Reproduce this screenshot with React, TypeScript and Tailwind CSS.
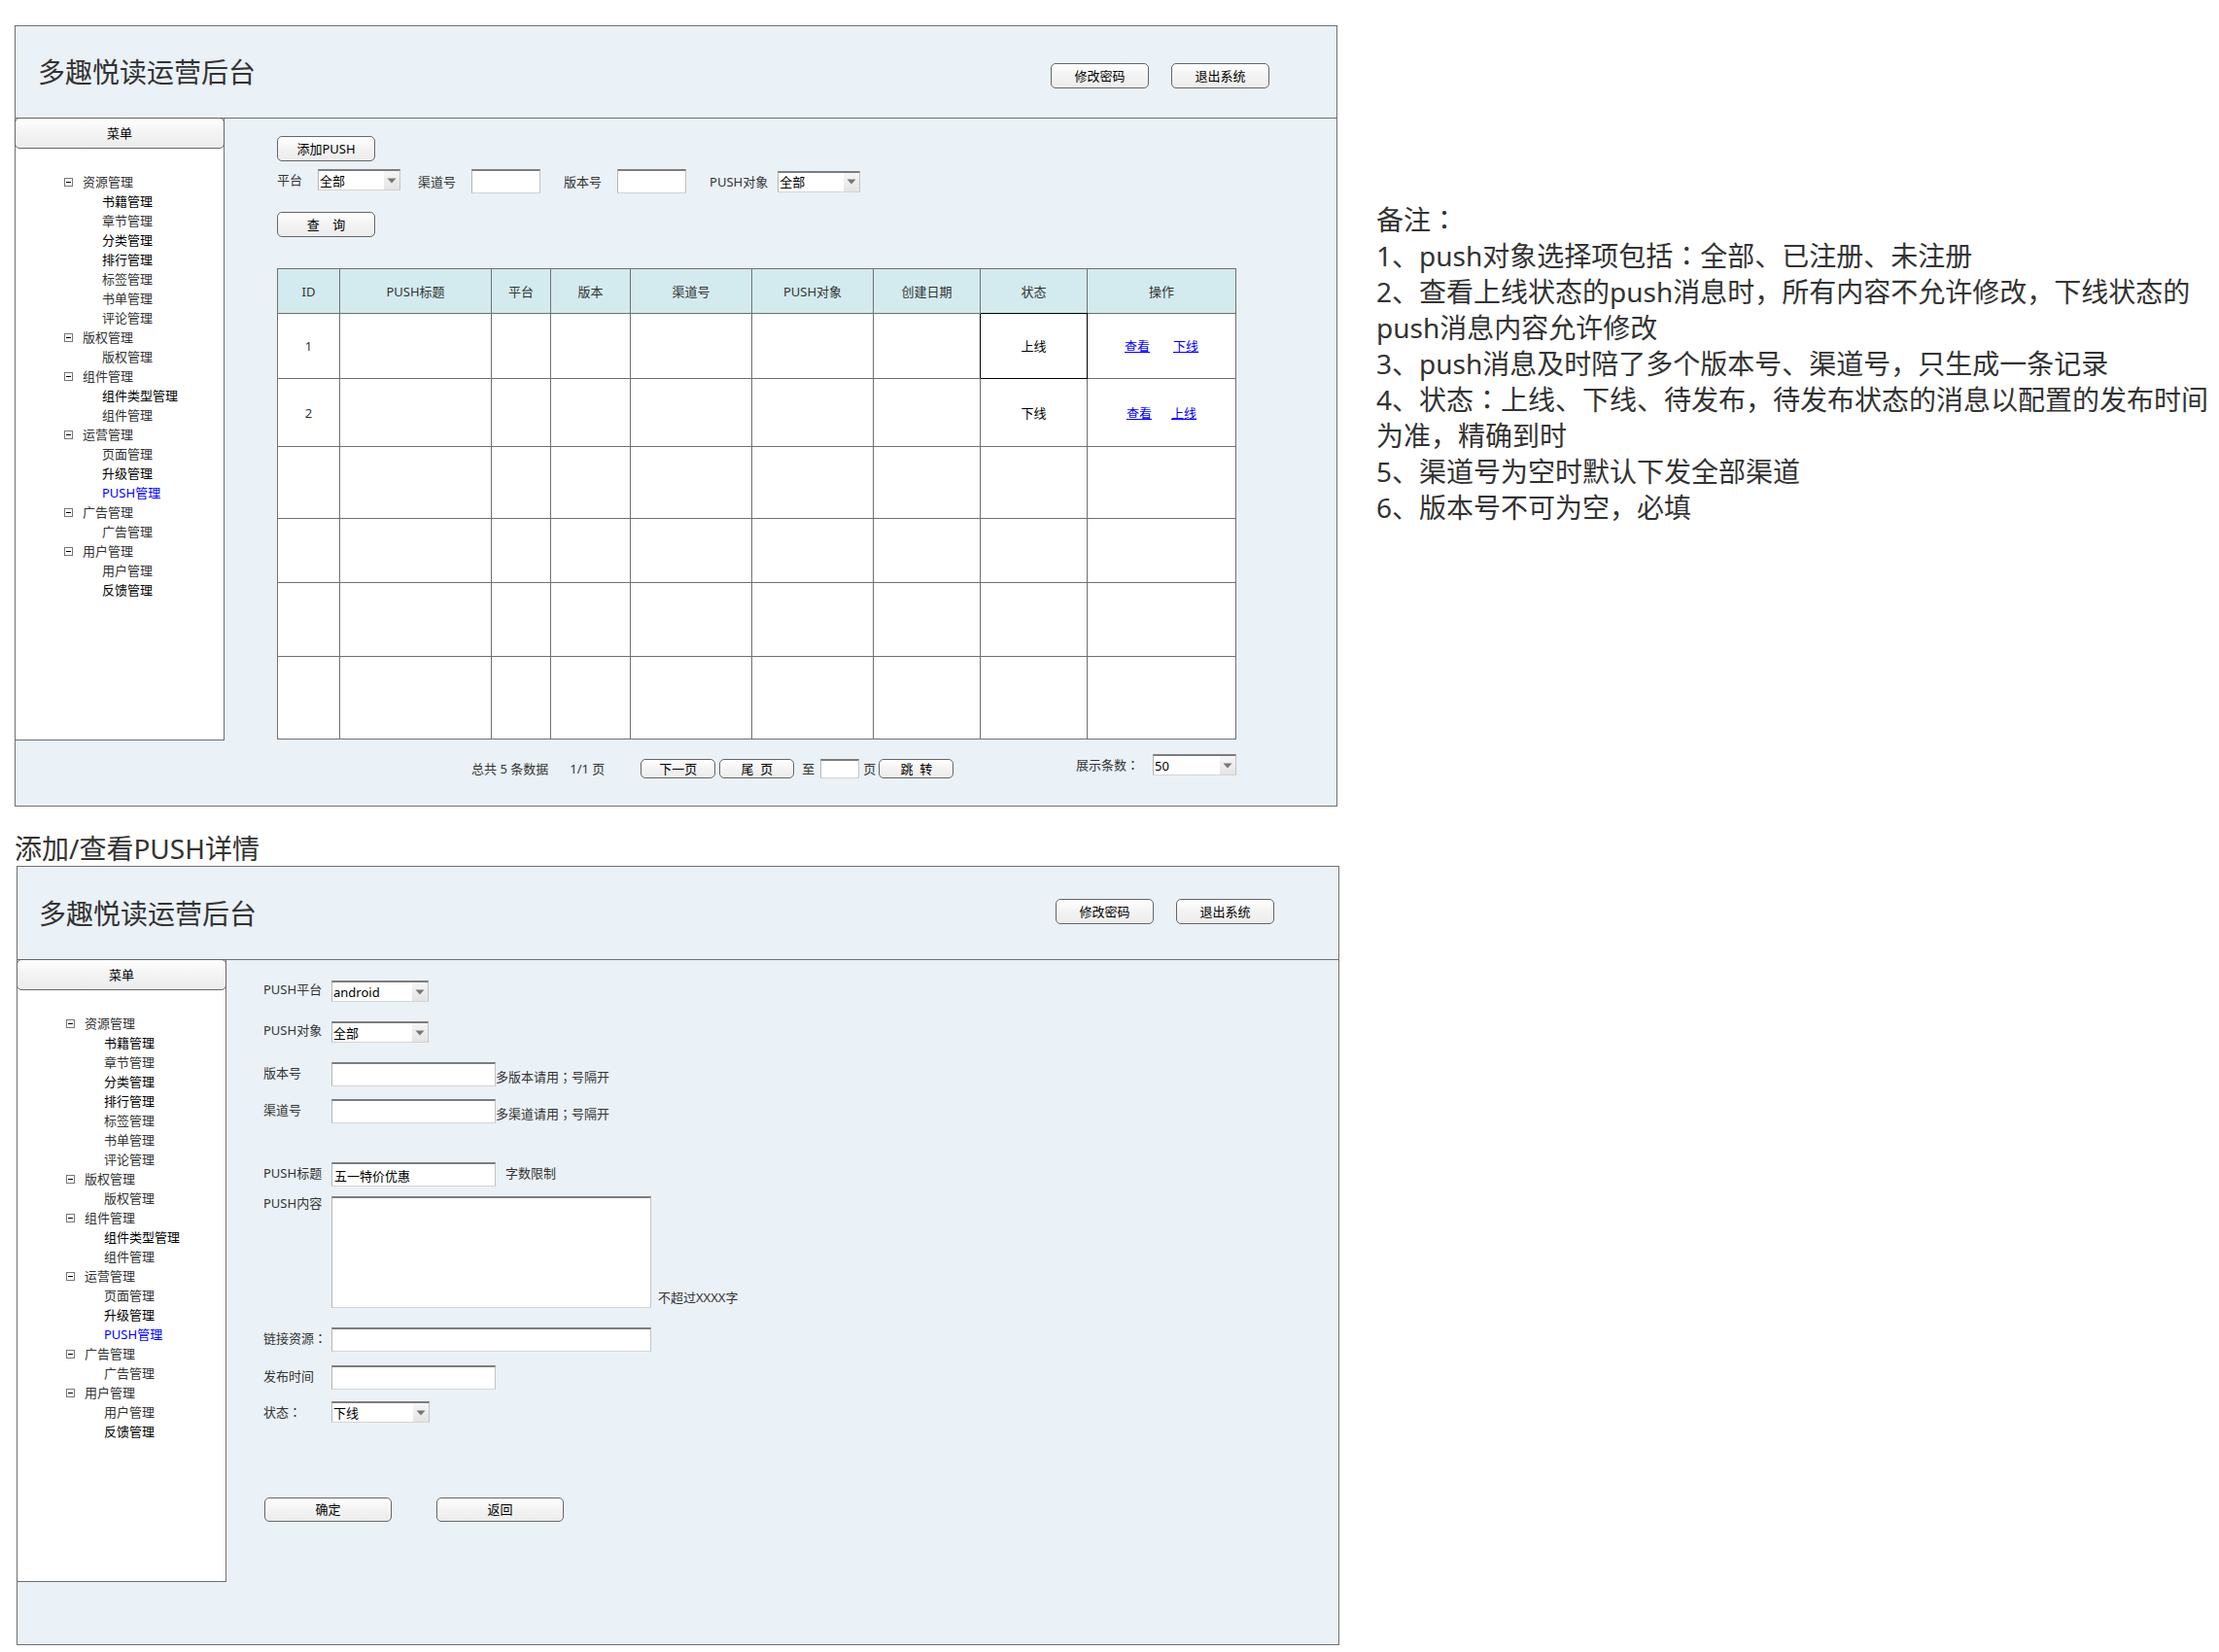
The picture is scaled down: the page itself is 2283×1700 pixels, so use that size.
import React, { useId } from "react";

const FONT = "font-['Noto_Sans','Noto_Sans_CJK_SC',sans-serif]";

type MenuChild = { label: string; tone?: "strong" | "active" };
type MenuGroup = { label: string; children: MenuChild[] };

const MENU: MenuGroup[] = [
  {
    label: "资源管理",
    children: [
      { label: "书籍管理", tone: "strong" },
      { label: "章节管理" },
      { label: "分类管理", tone: "strong" },
      { label: "排行管理", tone: "strong" },
      { label: "标签管理" },
      { label: "书单管理" },
      { label: "评论管理" },
    ],
  },
  { label: "版权管理", children: [{ label: "版权管理" }] },
  {
    label: "组件管理",
    children: [{ label: "组件类型管理", tone: "strong" }, { label: "组件管理" }],
  },
  {
    label: "运营管理",
    children: [
      { label: "页面管理" },
      { label: "升级管理", tone: "strong" },
      { label: "PUSH管理", tone: "active" },
    ],
  },
  { label: "广告管理", children: [{ label: "广告管理" }] },
  {
    label: "用户管理",
    children: [{ label: "用户管理" }, { label: "反馈管理", tone: "strong" }],
  },
];

const TONES = {
  normal: "text-[#333]",
  strong: "text-black",
  active: "text-[#0000ff]",
};

const NOTES = [
  "备注：",
  "1、push对象选择项包括：全部、已注册、未注册",
  "2、查看上线状态的push消息时，所有内容不允许修改，下线状态的push消息内容允许修改",
  "3、push消息及时陪了多个版本号、渠道号，只生成一条记录",
  "4、状态：上线、下线、待发布，待发布状态的消息以配置的发布时间为准，精确到时",
  "5、渠道号为空时默认下发全部渠道",
  "6、版本号不可为空，必填",
];

/* Full-width colons and semicolons are set centred in their cell. */
function Txt({ children }: { children: string }) {
  return (
    <>
      {children.split(/([：；])/).map((part, i) =>
        part === "：" || part === "；" ? (
          <span key={i} className="font-['Noto_Sans_CJK_JP',sans-serif] leading-none">
            {part}
          </span>
        ) : (
          part
        ),
      )}
    </>
  );
}

function Button({ children, className }: { children: React.ReactNode; className: string }) {
  return (
    <button
      type="button"
      className={`flex shrink-0 items-center justify-center whitespace-pre rounded-[5px] border border-[#666] bg-linear-to-b from-white via-[#f3f3f3] to-[#ececec] text-[13px] leading-none text-black ${className}`}
    >
      {children}
    </button>
  );
}

const FIELD =
  "block border border-t-2 border-t-[#7c7c7c] border-r-[#c4c4c4] border-b-[#d4d4d4] border-l-[#b4b4b4] bg-white text-[13px] text-black outline-none";

function Select({ id, value, className }: { id: string; value: string; className: string }) {
  return (
    <span className={`relative block h-[22px] shrink-0 ${className}`}>
      <select
        id={id}
        defaultValue={value}
        className={`${FIELD} h-full w-full appearance-none pl-px pr-4 leading-[18px]`}
      >
        <option>{value}</option>
      </select>
      <span className="pointer-events-none absolute top-0.5 right-px bottom-px flex w-4 items-center justify-center bg-linear-to-b from-[#f6f6f6] to-[#e4e4e4]">
        <svg width="10" height="6" viewBox="0 0 10 6" aria-hidden="true">
          <path d="M0.5 0.5H9.5L5 5.5Z" fill="#777" />
        </svg>
      </span>
    </span>
  );
}

function Panel({
  actionsClass,
  headerClass,
  children,
}: {
  actionsClass: string;
  headerClass: string;
  children: React.ReactNode;
}) {
  return (
    <section className="border border-[#707070] bg-[#eaf1f7]">
      <header className={`flex items-start justify-between border-b border-[#707070] ${headerClass}`}>
        <h1 className="self-center text-[28px] leading-9 text-[#333]">多趣悦读运营后台</h1>
        <div className={`flex ${actionsClass}`}>
          <Button className="h-[26px] w-[101px]">修改密码</Button>
          <Button className="h-[26px] w-[101px]">退出系统</Button>
        </div>
      </header>
      <div className="flex items-start">
        <nav className="min-h-[640px] w-[215px] shrink-0 border-r border-b border-[#707070] bg-white">
          <div className="-mx-px -mt-px">
            <Button className="h-8 w-full">菜单</Button>
          </div>
          <ul className="pt-6 text-[13px] leading-5">
            {MENU.map((group) => (
              <li key={group.label}>
                <div className="flex items-center gap-2.5 pl-[50px] text-[#333]">
                  <button type="button" aria-label={`收起${group.label}`} className="block">
                    <svg width="9" height="9" viewBox="0 0 9 9" aria-hidden="true">
                      <rect x="0.5" y="0.5" width="8" height="8" fill="#fff" stroke="#777" />
                      <path d="M2 4.5H7" stroke="#000" />
                    </svg>
                  </button>
                  <span>{group.label}</span>
                </div>
                <ul className="pl-[89px]">
                  {group.children.map((c) => (
                    <li key={c.label}>
                      <a href="#" className={`block ${TONES[c.tone ?? "normal"]}`}>
                        {c.label}
                      </a>
                    </li>
                  ))}
                </ul>
              </li>
            ))}
          </ul>
        </nav>
        <main className="min-w-0 grow">{children}</main>
      </div>
    </section>
  );
}

const COLUMNS = [
  { label: "ID", width: "w-[64px]" },
  { label: "PUSH标题", width: "w-[156px]" },
  { label: "平台", width: "w-[61px]" },
  { label: "版本", width: "w-[82px]" },
  { label: "渠道号", width: "w-[125px]" },
  { label: "PUSH对象", width: "w-[125px]" },
  { label: "创建日期", width: "w-[110px]" },
  { label: "状态", width: "w-[110px] border-b-black" },
  { label: "操作", width: "w-[153px]" },
];

type Row = {
  height: string;
  id?: string;
  status?: string;
  actions?: string[];
  gap?: string;
  before?: string;
  statusClass?: string;
  after?: string;
};

/* The status cell of the first row is selected; the cells around it share its black edge. */
const ROWS: Row[] = [
  {
    height: "h-[67px]",
    id: "1",
    status: "上线",
    actions: ["查看", "下线"],
    gap: "gap-6",
    before: "border-r-black",
    statusClass: "border-t-black border-r-black border-b-black border-l-black",
    after: "border-l-black",
  },
  {
    height: "h-[70px]",
    id: "2",
    status: "下线",
    actions: ["查看", "上线"],
    gap: "gap-5",
    statusClass: "border-t-black",
  },
  { height: "h-[74px]" },
  { height: "h-[66px]" },
  { height: "h-[76px]" },
  { height: "h-[85px]" },
];

const CELL = "border border-[#707070] p-0";

function PushTable() {
  return (
    <table className="w-full table-fixed border-collapse bg-white text-center text-[13px] leading-5 text-[#333]">
      <thead>
        <tr className="h-[46px] bg-[#d3ebee]">
          {COLUMNS.map((c) => (
            <th key={c.label} scope="col" className={`${CELL} font-normal ${c.width}`}>
              {c.label}
            </th>
          ))}
        </tr>
      </thead>
      <tbody>
        {ROWS.map((r, i) => (
          <tr key={i} className={r.height}>
            <td className={CELL}>{r.id}</td>
            {[0, 1, 2, 3, 4].map((n) => (
              <td key={n} className={CELL} />
            ))}
            <td className={`${CELL} ${r.before ?? ""}`} />
            <td className={`${CELL} text-black ${r.statusClass ?? ""}`}>{r.status}</td>
            <td className={`${CELL} ${r.after ?? ""}`}>
              {r.actions && (
                <span className={`flex justify-center ${r.gap}`}>
                  {r.actions.map((a) => (
                    <a key={a} href="#" className="text-[#0000ff] underline">
                      {a}
                    </a>
                  ))}
                </span>
              )}
            </td>
          </tr>
        ))}
      </tbody>
    </table>
  );
}

function ListPage() {
  const id = useId();
  return (
    <div className="pt-[18px] pr-[103px] pb-7 pl-[54px] text-[13px] leading-5 text-[#333]">
      <Button className="h-[26px] w-[101px]">添加PUSH</Button>
      <div className="mt-2 flex h-[25px] items-center">
        <div className="flex items-center gap-4 self-start">
          <label htmlFor={`${id}-platform`}>平台</label>
          <Select id={`${id}-platform`} value="全部" className="w-[85px]" />
        </div>
        <div className="ml-[18px] flex items-center gap-4">
          <label htmlFor={`${id}-channel`}>渠道号</label>
          <input id={`${id}-channel`} className={`${FIELD} h-[25px] w-[71px]`} />
        </div>
        <div className="ml-6 flex items-center gap-4">
          <label htmlFor={`${id}-version`}>版本号</label>
          <input id={`${id}-version`} className={`${FIELD} h-[25px] w-[71px]`} />
        </div>
        <div className="ml-6 flex items-center gap-2.5">
          <label htmlFor={`${id}-target`}>PUSH对象</label>
          <Select id={`${id}-target`} value="全部" className="w-[85px]" />
        </div>
      </div>
      <Button className="mt-[19px] mb-8 h-[26px] w-[101px]">{"查    询"}</Button>
      <PushTable />
      <div className="mt-[15px] flex items-start justify-between pl-[200px]">
        <div className="flex items-center pt-[5px]">
          <span>总共 5 条数据</span>
          <span className="ml-[22px]">1/1 页</span>
          <Button className="ml-[37px] h-5 w-[77px]">下一页</Button>
          <Button className="ml-1 h-5 w-[77px]">{"尾  页"}</Button>
          <label htmlFor={`${id}-page`} className="ml-2">
            至
          </label>
          <input id={`${id}-page`} className={`${FIELD} ml-1.5 mr-1 h-5 w-10`} />
          <span>页</span>
          <Button className="ml-[3px] h-5 w-[77px]">{"跳  转"}</Button>
        </div>
        <div className="flex items-center gap-[14px]">
          <label htmlFor={`${id}-size`}>
            <Txt>展示条数：</Txt>
          </label>
          <Select id={`${id}-size`} value="50" className="w-[86px]" />
        </div>
      </div>
    </div>
  );
}

function DetailPage() {
  const id = useId();
  const label = "w-[70px] shrink-0";
  return (
    <div className="pt-[21px] pl-[38px] text-[13px] text-[#333]">
      <div className="flex items-start">
        <label htmlFor={`${id}-platform`} className={`${label} leading-[18px]`}>
          PUSH平台
        </label>
        <Select id={`${id}-platform`} value="android" className="w-[100px]" />
      </div>
      <div className="mt-5 flex items-start">
        <label htmlFor={`${id}-target`} className={`${label} leading-[18px]`}>
          PUSH对象
        </label>
        <Select id={`${id}-target`} value="全部" className="w-[100px]" />
      </div>
      <div className="mt-5 flex h-[25px] items-start">
        <label htmlFor={`${id}-version`} className={`${label} leading-[22px]`}>
          版本号
        </label>
        <input id={`${id}-version`} className={`${FIELD} h-[25px] w-[169px]`} />
        <span className="leading-[30px]">
          <Txt>多版本请用；号隔开</Txt>
        </span>
      </div>
      <div className="mt-[13px] flex h-[25px] items-start">
        <label htmlFor={`${id}-channel`} className={`${label} leading-[22px]`}>
          渠道号
        </label>
        <input id={`${id}-channel`} className={`${FIELD} h-[25px] w-[169px]`} />
        <span className="leading-[30px]">
          <Txt>多渠道请用；号隔开</Txt>
        </span>
      </div>
      <div className="mt-10 flex items-start">
        <label htmlFor={`${id}-title`} className={`${label} leading-[22px]`}>
          PUSH标题
        </label>
        <input id={`${id}-title`} defaultValue="五一特价优惠" className={`${FIELD} h-[25px] w-[169px] px-0.5`} />
        <span className="ml-2.5 leading-[22px]">字数限制</span>
      </div>
      <div className="mt-2.5 flex items-start">
        <label htmlFor={`${id}-content`} className={`${label} leading-[14px]`}>
          PUSH内容
        </label>
        <textarea id={`${id}-content`} className={`${FIELD} h-[115px] w-[329px] resize-none`} />
        <span className="ml-[7px] self-end leading-[22px]">不超过XXXX字</span>
      </div>
      <div className="mt-5 flex items-start">
        <label htmlFor={`${id}-link`} className={`${label} leading-[22px]`}>
          <Txt>链接资源：</Txt>
        </label>
        <input id={`${id}-link`} className={`${FIELD} h-[25px] w-[329px]`} />
      </div>
      <div className="mt-[14px] flex items-start">
        <label htmlFor={`${id}-time`} className={`${label} leading-[22px]`}>
          发布时间
        </label>
        <input id={`${id}-time`} className={`${FIELD} h-[25px] w-[169px]`} />
      </div>
      <div className="mt-3 flex items-start">
        <label htmlFor={`${id}-status`} className={`${label} leading-[22px]`}>
          <Txt>状态：</Txt>
        </label>
        <Select id={`${id}-status`} value="下线" className="w-[101px]" />
      </div>
      <div className="mt-[77px] flex gap-[46px] pl-px">
        <Button className="h-[25px] w-[131px]">确定</Button>
        <Button className="h-[25px] w-[131px]">返回</Button>
      </div>
    </div>
  );
}

export default function App() {
  return (
    <div
      className={`grid min-h-screen grid-cols-[minmax(0,1363fr)_minmax(0,860fr)] gap-[38px] bg-white pt-[26px] pr-[7px] pb-[9px] pl-[15px] ${FONT}`}
    >
      <div>
        <div className="pr-0.5">
          <Panel headerClass="h-[95px] pl-[23px]" actionsClass="gap-[23px] pt-[38px] pr-[69px]">
            <ListPage />
          </Panel>
        </div>
        <h2 className="mt-[26px] text-[28px] leading-[35px] text-[#333]">添加/查看PUSH详情</h2>
        <div className="pl-0.5">
          <Panel headerClass="h-24 pl-[22px]" actionsClass="gap-[23px] pt-[33px] pr-[66px]">
            <div className="pb-[126px]">
              <DetailPage />
            </div>
          </Panel>
        </div>
      </div>
      <aside className="pt-[182px] text-[28px] leading-[37px] text-[#333]">
        {NOTES.map((n) => (
          <p key={n}>
            <Txt>{n}</Txt>
          </p>
        ))}
      </aside>
    </div>
  );
}
